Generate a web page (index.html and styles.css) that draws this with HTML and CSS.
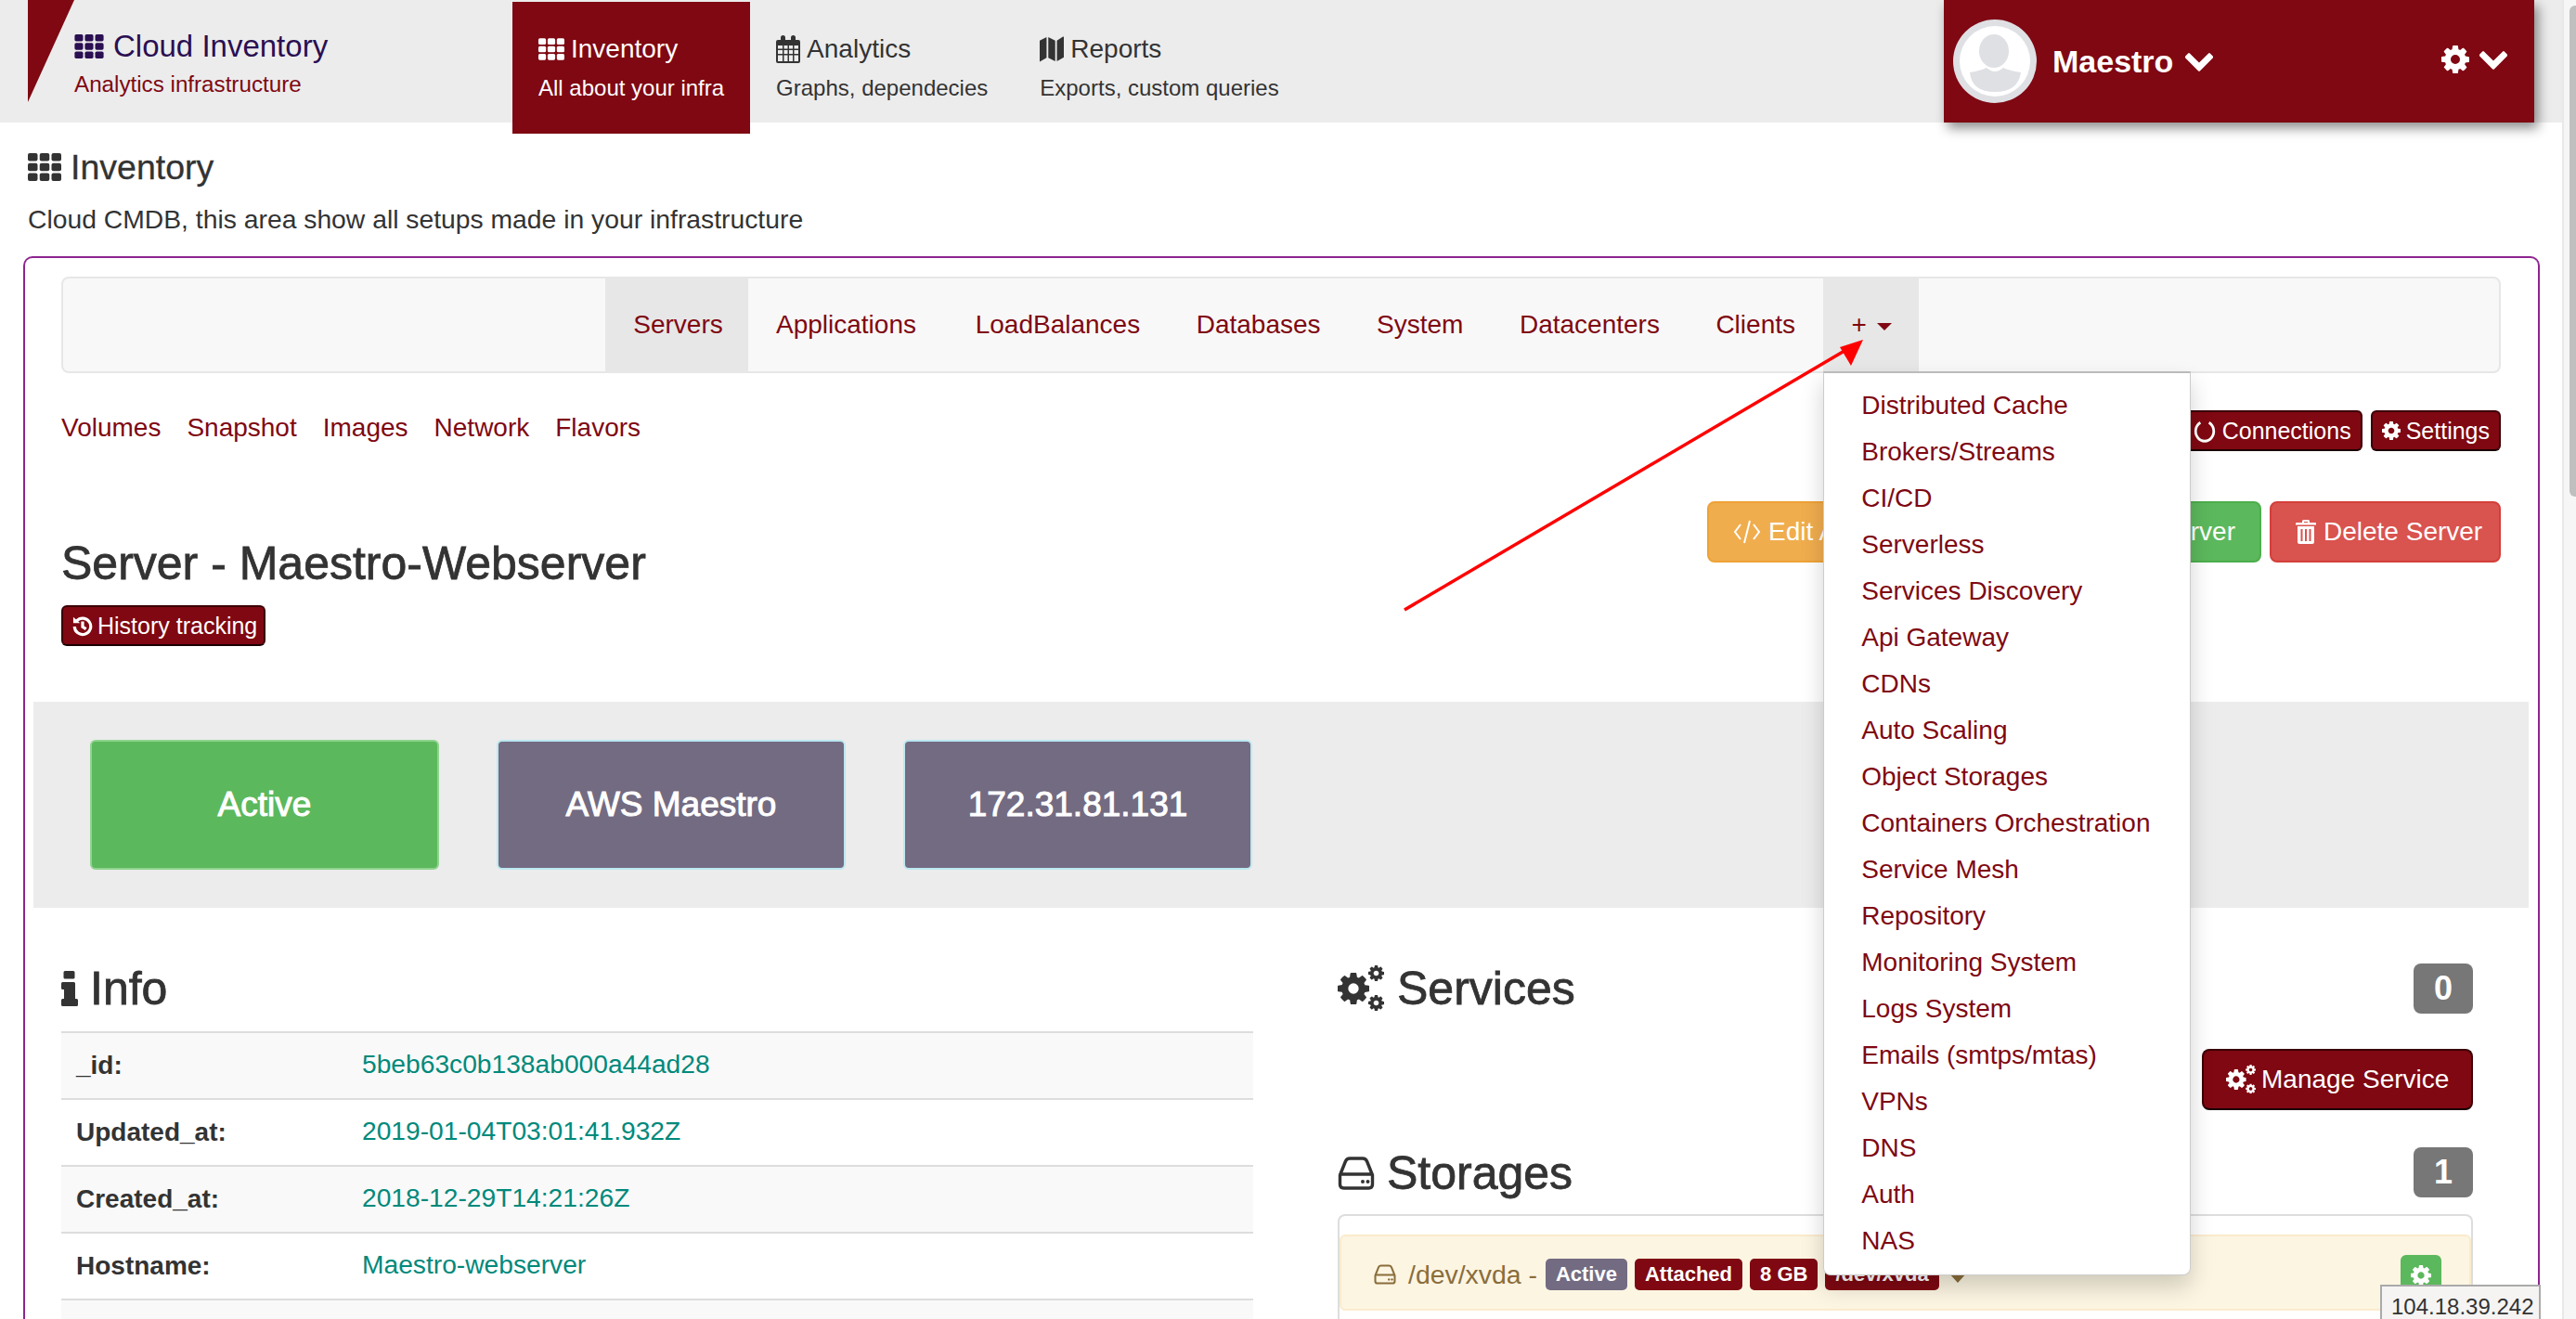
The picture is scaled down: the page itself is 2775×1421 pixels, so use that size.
FILE: index.html
```html
<!DOCTYPE html>
<html lang="en">
<head>
<meta charset="utf-8">
<title>Cloud Inventory</title>
<link rel="stylesheet" href="styles.css">
</head>
<body>
<svg class="defs" aria-hidden="true">
  <symbol id="cog" viewBox="128 128 1536 1536"><path fill="currentColor" fill-rule="evenodd" d="M1152 896q0-106-75-181t-181-75-181 75-75 181 75 181 181 75 181-75 75-181zm512-109v222q0 12-8 23t-20 13l-185 28q-19 54-39 91 35 50 107 138 10 12 10 25t-9 23q-27 37-99 108t-94 71q-12 0-26-9l-138-108q-44 23-91 38-16 136-29 186-7 28-36 28h-222q-14 0-24.5-8.5t-11.5-21.5l-28-184q-49-16-90-37l-141 107q-10 9-25 9-14 0-25-11-126-114-165-168-7-10-7-23 0-12 8-23 15-21 51-66.5t54-70.5q-27-50-41-99l-183-27q-13-2-21-12.5t-8-23.5v-222q0-12 8-23t19-13l186-28q14-46 39-92-40-57-107-138-10-12-10-24 0-10 9-23 26-36 98.5-107.5t94.5-71.5q13 0 26 10l138 107q44-23 91-38 16-136 29-186 7-28 36-28h222q14 0 24.5 8.5t11.5 21.5l28 184q49 16 90 37l142-107q9-9 24-9 13 0 25 10 129 119 165 170 7 8 7 22 0 12-8 23-15 21-51 66.5t-54 70.5q26 50 41 98l183 28q13 2 21 12.5t8 23.5z"/></symbol>
  <symbol id="chev" viewBox="109 480 1574 1090"><path fill="currentColor" d="M1683 808l-742 741q-19 19-45 19t-45-19l-742-741q-19-19-19-45.5t19-45.5l166-165q19-19 45-19t45 19l531 531 531-531q19-19 45-19t45 19l166 165q19 19 19 45.5t-19 45.5z"/></symbol>
  <symbol id="th" viewBox="0 0 36 30"><g fill="currentColor"><rect width="10.5" height="8.6" rx="2"/><rect x="12.75" width="10.5" height="8.6" rx="2"/><rect x="25.5" width="10.5" height="8.6" rx="2"/><rect y="10.7" width="10.5" height="8.6" rx="2"/><rect x="12.75" y="10.7" width="10.5" height="8.6" rx="2"/><rect x="25.5" y="10.7" width="10.5" height="8.6" rx="2"/><rect y="21.4" width="10.5" height="8.6" rx="2"/><rect x="12.75" y="21.4" width="10.5" height="8.6" rx="2"/><rect x="25.5" y="21.4" width="10.5" height="8.6" rx="2"/></g></symbol>
  <symbol id="hdd" viewBox="0 0 40 36"><path fill="none" stroke="currentColor" stroke-width="3.4" stroke-linejoin="round" d="M2.5 20 L8.5 5 Q9.8 2 13 2 H27 Q30.2 2 31.5 5 L37.5 20 V30 Q37.5 34 33.5 34 H6.5 Q2.5 34 2.5 30 Z M2.5 19 H37.5"/><circle cx="27" cy="27" r="2" fill="currentColor"/><circle cx="32.5" cy="27" r="2" fill="currentColor"/></symbol>
  <symbol id="cogs" viewBox="0 0 50 50"><use href="#cog" x="0" y="8" width="34" height="34"/><use href="#cog" x="33" y="0" width="17" height="17"/><use href="#cog" x="33" y="32" width="17" height="17"/></symbol>
</svg>

<div class="page">
  <header class="topbar">
    <div class="wedge"></div>
    <div class="brand">
      <div class="brand-title"><svg class="i-th-brand"><use href="#th"/></svg>Cloud Inventory</div>
      <div class="brand-sub">Analytics infrastructure</div>
    </div>
    <nav class="mainnav">
      <a class="maintab maintab-active">
        <span class="maintab-title"><svg class="i-th-tab"><use href="#th"/></svg>Inventory</span>
        <span class="maintab-sub">All about your infra</span>
      </a>
      <a class="maintab">
        <span class="maintab-title"><svg class="i-tab" viewBox="0 0 26 30"><path fill="currentColor" fill-rule="evenodd" d="M2 5h3V2.500a2.500 2.500 0 0 1 5 0V5h6V2.500a2.500 2.500 0 0 1 5 0V5h3a2 2 0 0 1 2 2v21a2 2 0 0 1-2 2H2a2 2 0 0 1-2-2V7a2 2 0 0 1 2-2zM2 11v3.500h5V11zm6.500 0v3.500h4V11zm5.500 0v3.500h4V11zm5.500 0v3.500H24V11zM2 16v4h5v-4zm6.500 0v4h4v-4zm5.500 0v4h4v-4zm5.500 0v4H24v-4zM2 21.500V28h5v-6.500zm6.500 0V28h4v-6.500zm5.500 0V28h4v-6.500zm5.500 0V28H24v-6.500z"/></svg>Analytics</span>
        <span class="maintab-sub">Graphs, dependecies</span>
      </a>
      <a class="maintab">
        <span class="maintab-title"><svg class="i-tab" viewBox="0 0 28 30"><path fill="currentColor" d="M0 5 8 1v24l-8 4.500zM10 1l8 4v24l-8-4zM20 5l7-4.500a.6.6 0 0 1 1 .5v23.500L20 29z"/></svg>Reports</span>
        <span class="maintab-sub">Exports, custom queries</span>
      </a>
    </nav>
    <div class="userpanel">
      <svg class="avatar" viewBox="0 0 90 90"><circle cx="45" cy="45" r="45" fill="#dfe0e4"/><circle cx="45" cy="45" r="38" fill="#fff"/><ellipse cx="44" cy="34" rx="16" ry="18" fill="#dfe0e4"/><path fill="#dfe0e4" d="M18 57 Q30 55 36 52 Q45 60 54 52 Q60 55 73 57 Q70 78 45 78 Q20 78 18 57Z"/></svg>
      <span class="username">Maestro</span>
      <svg class="i-chev"><use href="#chev"/></svg>
      <span class="user-tools">
        <svg class="i-usercog"><use href="#cog"/></svg>
        <svg class="i-chev"><use href="#chev"/></svg>
      </span>
    </div>
  </header>

  <section class="pagehead">
    <h1 class="pagetitle"><svg class="i-th-page"><use href="#th"/></svg>Inventory</h1>
    <p class="pagedesc">Cloud CMDB, this area show all setups made in your infrastructure</p>
  </section>

  <main class="box">
    <div class="navbar">
      <a class="navitem navitem-active navitem-servers">Servers</a>
      <a class="navitem navitem-apps">Applications</a>
      <a class="navitem">LoadBalances</a>
      <a class="navitem">Databases</a>
      <a class="navitem">System</a>
      <a class="navitem">Datacenters</a>
      <a class="navitem">Clients</a>
      <div class="navitem navitem-active navmore">+<span class="caret"></span>
        <ul class="dropdown">
          <li>Distributed Cache</li>
          <li>Brokers/Streams</li>
          <li>CI/CD</li>
          <li>Serverless</li>
          <li>Services Discovery</li>
          <li>Api Gateway</li>
          <li>CDNs</li>
          <li>Auto Scaling</li>
          <li>Object Storages</li>
          <li>Containers Orchestration</li>
          <li>Service Mesh</li>
          <li>Repository</li>
          <li>Monitoring System</li>
          <li>Logs System</li>
          <li>Emails (smtps/mtas)</li>
          <li>VPNs</li>
          <li>DNS</li>
          <li>Auth</li>
          <li>NAS</li>
        </ul>
      </div>
    </div>

    <div class="subrow">
      <div class="sublinks">
        <a>Volumes</a><a>Snapshot</a><a>Images</a><a>Network</a><a>Flavors</a>
      </div>
      <div class="subtools">
        <a class="btn-dark btn-sm"><svg class="i-notch" viewBox="0 0 24 28"><path fill="none" stroke="currentColor" stroke-width="3" d="M7 4.500a10.500 11.500 0 1 0 10 0"/></svg>Connections</a>
        <a class="btn-dark btn-sm"><svg class="i-sm"><use href="#cog"/></svg>Settings</a>
      </div>
    </div>

    <div class="titlerow">
      <div class="titleblock">
        <h2 class="servertitle">Server - Maestro-Webserver</h2>
        <a class="btn-dark btn-sm btn-history"><svg class="i-history" viewBox="0 0 24 24"><path fill="none" stroke="currentColor" stroke-width="3.500" d="M5 6.500a9.500 9.500 0 1 1-2.500 6.500M12 7v6.500l4 2.500"/><path fill="currentColor" d="M1 2l8 7H1z"/></svg>History tracking</a>
      </div>
      <div class="actions">
        <a class="btn-lg btn-orange"><svg class="i-code" viewBox="0 0 30 26"><path fill="none" stroke="currentColor" stroke-width="2" d="M8 5 2 13l6 8M22 5l6 8-6 8M18 1l-6 24"/></svg>Edit API</a>
        <a class="btn-lg btn-green">Edit Server</a>
        <a class="btn-lg btn-red"><svg class="i-trash" viewBox="0 0 22 26"><path fill="currentColor" fill-rule="evenodd" d="M7 3V1.500Q7 0 8.500 0h5Q15 0 15 1.500V3h6q1 0 1 1v1.500H0V4q0-1 1-1zM9 3h4V2H9zM2 7h18v17q0 2-2 2H4q-2 0-2-2zm3.500 3v13H7.500V10zm4.500 0v13h2V10zm4.500 0v13h2V10z"/></svg>Delete Server</a>
      </div>
    </div>

    <div class="band">
      <div class="stat stat-green">Active</div>
      <div class="stat stat-purple">AWS Maestro</div>
      <div class="stat stat-purple">172.31.81.131</div>
    </div>

    <div class="columns">
      <section class="col-left">
        <h3 class="sectitle sectitle-info"><svg class="i-info" viewBox="0 0 18 38"><path fill="currentColor" d="M4 0h9q1.500 0 1.500 1.500V7q0 1.500-1.500 1.500H4Q2.500 8.500 2.500 7V1.500Q2.500 0 4 0zM1.500 12h12q1.500 0 1.500 1.500V30h1.500q1.500 0 1.500 1.500v5q0 1.500-1.500 1.500h-15Q0 38 0 36.500v-5Q0 30 1.500 30H3V20H1.500Q0 20 0 18.500v-5Q0 12 1.500 12z"/></svg>Info</h3>
        <table class="infotable">
          <tr><th>_id:</th><td>5beb63c0b138ab000a44ad28</td></tr>
          <tr><th>Updated_at:</th><td>2019-01-04T03:01:41.932Z</td></tr>
          <tr><th>Created_at:</th><td>2018-12-29T14:21:26Z</td></tr>
          <tr><th>Hostname:</th><td>Maestro-webserver</td></tr>
          <tr class="row-partial"><th></th><td></td></tr>
        </table>
      </section>
      <section class="col-right">
        <div class="sechead">
          <h3 class="sectitle sectitle-services"><svg class="i-cogs"><use href="#cogs"/></svg>Services</h3>
          <span class="countbadge">0</span>
        </div>
        <div class="managerow">
          <a class="btn-dark btn-manage"><svg class="i-managecogs"><use href="#cogs"/></svg>Manage Service</a>
        </div>
        <div class="sechead sechead-storages">
          <h3 class="sectitle sectitle-storages"><svg class="i-hdd"><use href="#hdd"/></svg>Storages</h3>
          <span class="countbadge">1</span>
        </div>
        <div class="panel">
          <div class="storage">
            <svg class="i-hdd-sm"><use href="#hdd"/></svg>
            <span class="storage-name">/dev/xvda -</span>
            <span class="tag tag-purple">Active</span>
            <span class="tag">Attached</span>
            <span class="tag">8 GB</span>
            <span class="tag">/dev/xvda</span>
            <span class="storage-caret"></span>
            <a class="gearbtn"><svg class="i-gearbtn"><use href="#cog"/></svg></a>
          </div>
        </div>
      </section>
    </div>
  </main>

  <svg class="arrow" viewBox="0 0 2775 1421" aria-hidden="true">
    <line x1="1513" y1="657" x2="1992" y2="375" stroke="#f00" stroke-width="3.500"/>
    <path fill="#f00" d="M2007 366 1982 374 1994 394z"/>
  </svg>
  <div class="tooltip">104.18.39.242</div>
  <div class="scrolltrack"><div class="scrollthumb"></div></div>
</div>
</body>
</html>
```
FILE: styles.css
```css
* { box-sizing: border-box; }
html, body { margin: 0; height: 1421px; overflow: hidden; background: #fff; }
body { font-family: "Liberation Sans", Arial, sans-serif; font-size: 28px; color: #333; }
a { color: inherit; text-decoration: none; }
svg { display: inline-block; flex: none; }
.defs { position: absolute; width: 0; height: 0; }
.page { position: relative; width: 2775px; height: 1421px; overflow: hidden; }

/* top bar */
.topbar { display: flex; width: 2760px; height: 132px; padding-left: 30px; background: #ececec; }
.wedge { flex: 0 0 50px; height: 110px; background: #7f0812; clip-path: polygon(0 0, 100% 0, 0 100%); }
.brand { flex: 0 0 472px; padding-top: 31px; }
.brand-title { display: flex; align-items: center; font-size: 33px; line-height: 38px; color: #2a0f52; white-space: nowrap; }
.i-th-brand { width: 32px; height: 26px; margin-right: 10px; }
.brand-sub { margin-top: 7px; font-size: 24.2px; line-height: 30px; color: #7f0812; white-space: nowrap; }
.mainnav { display: flex; align-items: flex-start; }
.maintab { display: flex; flex-direction: column; height: 142px; margin-top: 2px; padding: 31px 28px 0; white-space: nowrap; color: #333; }
.maintab-active { background: #7f0812; color: #fff; position: relative; z-index: 2; }
.maintab-title { display: flex; align-items: center; height: 40px; font-size: 28px; }
.maintab-sub { margin-top: 5px; font-size: 24px; line-height: 34px; }
.i-th-tab { width: 28px; height: 24px; margin-right: 7px; }
.i-tab { width: 26px; height: 30px; margin-right: 7px; }
.userpanel { display: flex; align-items: center; width: 636px; height: 132px; margin-left: auto; margin-right: 30px; padding-left: 10px; background: #7f0812; color: #fff; box-shadow: 4px 6px 12px rgba(0, 0, 0, .45); position: relative; z-index: 2; }
.avatar { width: 90px; height: 90px; }
.username { margin-left: 17px; font-size: 34px; font-weight: 700; }
.i-chev { width: 30px; height: 21px; margin-left: 13px; }
.user-tools { display: flex; align-items: center; margin-left: auto; margin-right: 29px; margin-top: -4px; }
.user-tools .i-chev { margin-left: 11px; }
.i-usercog { width: 30px; height: 30px; }

/* page heading */
.pagehead { padding: 23px 0 0 30px; }
.pagetitle { display: flex; align-items: center; margin: 0; font-size: 37.5px; font-weight: 400; line-height: 50px; -webkit-text-stroke: .3px #333; }
.i-th-page { width: 36px; height: 30px; margin-right: 10px; }
.pagedesc { margin: 11px 0 0; font-size: 28.3px; line-height: 40px; }

/* bordered box */
.box { width: 2711px; height: 1145px; margin: 20px 0 0 25px; padding: 20px 0 0; border: 2px solid #8e2490; border-bottom: 0; border-radius: 10px 10px 0 0; }
.navbar { display: flex; height: 104px; margin: 0 40px 0 39px; padding-left: 584px; border: 2px solid #e7e7e7; border-radius: 8px; background: #f8f8f8; }
.navitem { display: block; height: 100px; padding: 0 30.25px; line-height: 100px; color: #7f0812; white-space: nowrap; }
.navitem-servers { padding-right: 27px; }
.navitem-apps { padding-right: 33.5px; }
.navitem-active { background: #e7e7e7; }
.navmore { position: relative; width: 103px; }
.caret { display: inline-block; margin-left: 11px; vertical-align: 3px; border-top: 8px solid #7f0812; border-left: 8px solid transparent; border-right: 8px solid transparent; }
.dropdown { position: absolute; z-index: 5; top: 100px; left: 0; width: 396px; margin: 0; padding: 10px 0 11px; list-style: none; background: #fff; border: 1px solid #ccc; border-top: 2px solid #bbb; border-radius: 0 0 8px 8px; box-shadow: 0 12px 24px rgba(0, 0, 0, .18); }
.dropdown li { height: 50px; padding-left: 40px; line-height: 50px; white-space: nowrap; }

.subrow { display: flex; justify-content: space-between; margin: 40px 40px 0 39px; }
.sublinks { display: flex; gap: 28px; line-height: 38px; color: #7f0812; }
.subtools { display: flex; gap: 9px; }
.btn-dark { display: flex; align-items: center; background: #7f0812; color: #fff; border: 2px solid #3a0006; border-bottom-color: #1a0003; white-space: nowrap; }
.btn-sm { height: 44px; padding: 0 10px; font-size: 25px; border-radius: 6px; }
.i-sm { width: 20px; height: 22px; margin-right: 6px; }
.i-history { width: 22px; height: 24px; margin-right: 5px; }
.i-notch { width: 24px; height: 26px; margin-right: 7px; }

.titlerow { display: flex; justify-content: space-between; margin: 54px 40px 0 39px; }
.titleblock { padding-top: 37px; }
.servertitle { margin: 0; font-size: 50px; font-weight: 400; line-height: 60px; -webkit-text-stroke: .8px #333; white-space: nowrap; }
.btn-history { width: 220px; margin-top: 15px; }
.actions { display: flex; gap: 9px; align-items: flex-start; }
.btn-lg { display: flex; align-items: center; height: 66px; padding: 0 26px; color: #fff; border-radius: 8px; border: 2px solid; white-space: nowrap; }
.btn-orange { width: 311px; background: #f0ad4e; border-color: #eea236; }
.btn-green { width: 277px; justify-content: flex-end; background: #5cb85c; border-color: #4cae4c; }
.btn-red { width: 249px; background: #d9534f; border-color: #d43f3a; }
.i-code { width: 30px; height: 26px; margin-right: 8px; }
.i-trash { width: 22px; height: 26px; margin-right: 8px; }

.band { display: flex; gap: 62px; height: 222px; margin: 60px 10px 0 9px; padding: 41px 0 0 61px; background: #ececec; }
.stat { display: flex; align-items: center; justify-content: center; width: 376px; height: 140px; border-radius: 6px; border: 2px solid; color: #fff; font-size: 37px; -webkit-text-stroke: 1px #fff; white-space: nowrap; }
.stat-green { background: #5cb85c; border-color: #8fd48f; }
.stat-purple { background: #736b82; border-color: #bce8f1; }

/* two columns */
.columns { display: flex; gap: 91px; padding: 57px 70px 0 39px; }
.col-left { flex: 0 0 1284px; }
.col-right { flex: 1; min-width: 0; }
.sectitle { display: flex; align-items: center; margin: 0; font-size: 50px; font-weight: 400; line-height: 60px; -webkit-text-stroke: .8px #333; white-space: nowrap; }
.sectitle-storages { padding-top: 3px; }
.i-info { width: 18px; height: 38px; margin-right: 13px; }
.i-cogs { width: 50px; height: 50px; margin-right: 14px; }
.i-hdd { width: 40px; height: 36px; margin-right: 13px; color: #333; }
.infotable { width: 100%; margin-top: 16px; border-collapse: collapse; }
.infotable tr { height: 72px; }
.infotable .row-partial { height: 23px; }
.infotable tr:nth-child(odd) { background: #f9f9f9; }
.infotable th, .infotable td { border-top: 2px solid #ddd; padding: 0; }
.infotable th { width: 324px; padding-left: 16px; text-align: left; font-weight: 700; }
.infotable td { padding-bottom: 4px; color: #00897b; font-size: 28.2px; }

.sechead { display: flex; justify-content: space-between; align-items: flex-start; }
.countbadge { display: flex; align-items: center; justify-content: center; width: 64px; height: 54px; margin-top: 3px; background: #777; color: #fff; border-radius: 8px; font-size: 36px; font-weight: 700; }
.managerow { display: flex; justify-content: flex-end; margin-top: 35px; }
.btn-manage { height: 66px; width: 292px; padding-left: 24px; border-radius: 8px; }
.i-managecogs { width: 32px; height: 32px; margin-right: 6px; }
.sechead-storages { height: 60px; margin-top: 35px; }
.sechead-storages .countbadge { margin-top: 5px; }
.panel { height: 113px; margin-top: 17px; padding-top: 20px; border: 2px solid #ddd; border-bottom: 0; border-radius: 8px 8px 0 0; }
.storage { display: flex; align-items: flex-start; height: 82px; padding: 24px 0 0 35px; background: #fcf5e2; border: 2px solid #faebcc; border-radius: 6px; color: #8a6d3b; }
.i-hdd-sm { width: 24px; height: 26px; margin-top: 4px; margin-right: 13px; }
.storage-name { margin-right: 9px; font-size: 28.4px; line-height: 34px; white-space: nowrap; }
.tag { display: block; height: 34px; margin-right: 8px; padding: 0 11px; background: #7f0812; color: #fff; border-radius: 5px; font-size: 22px; font-weight: 700; line-height: 34px; white-space: nowrap; }
.tag-purple { background: #736b82; }
.storage-caret { margin: 15px 0 0 2px; border-top: 11px solid #8a6d3b; border-left: 10px solid transparent; border-right: 10px solid transparent; }
.gearbtn { display: flex; justify-content: center; align-items: center; width: 44px; height: 44px; margin: -4px 30px 0 auto; background: #5cb85c; border-radius: 6px; color: #fff; }
.i-gearbtn { width: 22px; height: 22px; }

/* overlays */
.arrow { position: absolute; inset: 0; width: 2775px; height: 1421px; z-index: 6; pointer-events: none; }
.tooltip { position: absolute; z-index: 7; top: 1384px; left: 2564px; width: 173px; height: 37px; padding: 11px 0 0 10px; background: #f5f4f2; border: 2px solid #aaa; border-bottom: 0; font-size: 24px; line-height: 22px; white-space: nowrap; }
.scrolltrack { position: absolute; top: 0; right: 0; width: 15px; height: 1421px; padding: 6px 0 0 6px; background: #f6f6f6; border-left: 2px solid #e8e8e8; }
.scrollthumb { width: 7px; height: 529px; background: #bfbfbf; border-radius: 6px 0 0 6px; }
```
